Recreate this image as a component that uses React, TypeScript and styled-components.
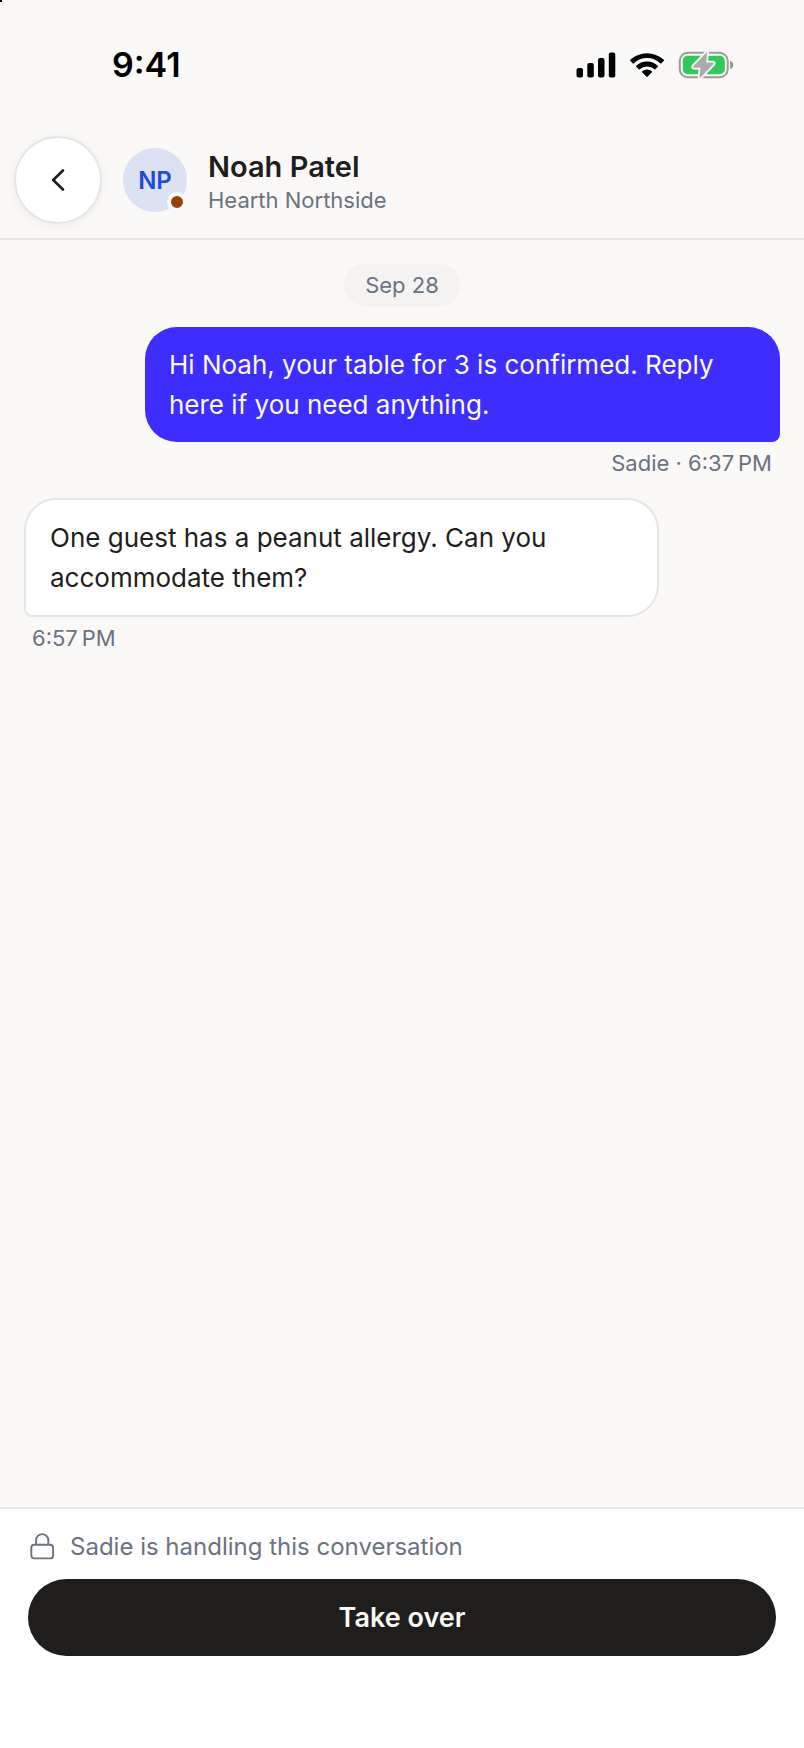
import React from "react";
import styled, { createGlobalStyle } from "styled-components";

const GlobalStyle = createGlobalStyle`
  * {
    box-sizing: border-box;
  }

  body {
    margin: 0;
    background: #faf9f7;
    color: #1f1e1c;
    font-family: Inter, "Liberation Sans", sans-serif;
  }

  button {
    font-family: inherit;
    cursor: pointer;
  }
`;

const Screen = styled.div`
  position: relative;
  min-height: 100vh;
  display: flex;
  flex-direction: column;
`;

const CornerMark = styled.span`
  position: absolute;
  top: 0;
  left: 0;
  width: 2px;
  height: 2px;
  background: #000000;
`;

const StatusBar = styled.div`
  height: 130px;
  padding: 0 70px 0 112px;
  display: flex;
  justify-content: space-between;
  align-items: center;
  color: #000000;
`;

const Clock = styled.time`
  font-size: 34px;
  line-height: 40px;
  font-weight: 600;
`;

const StatusIcons = styled.div`
  display: flex;
  align-items: center;
  gap: 14px;

  svg {
    display: block;
  }
`;

const StyledHeader = styled.header`
  padding: 6px 14px 14px;
  display: flex;
  align-items: center;
  border-bottom: 2px solid #e6e5e2;
`;

const BackButton = styled.button`
  width: 88px;
  height: 88px;
  padding: 0;
  display: flex;
  align-items: center;
  justify-content: center;
  border: 2px solid #e6e5e2;
  border-radius: 50%;
  background: #ffffff;
  color: #1f1e1c;
  box-shadow: 0 2px 8px rgba(0, 0, 0, 0.06);
`;

const Avatar = styled.div`
  position: relative;
  width: 64px;
  height: 64px;
  margin: 0 21px;
  display: flex;
  align-items: center;
  justify-content: center;
  border-radius: 50%;
  background: #dce1f3;
  color: #1d4ed8;
  font-size: 24px;
  font-weight: 600;
`;

const Presence = styled.span`
  position: absolute;
  right: 0;
  bottom: 0;
  width: 20px;
  height: 20px;
  border: 4px solid #faf9f7;
  border-radius: 50%;
  background: #92400e;
`;

const Contact = styled.div`
  padding-top: 4px;

  h1 {
    margin: 0;
    font-size: 29px;
    line-height: 36px;
    font-weight: 600;
  }

  p {
    margin: 0;
    color: #6b7280;
    font-size: 22px;
    line-height: 30px;
  }
`;

const Thread = styled.main`
  flex: 1;
  padding: 24px;
  display: flex;
  flex-direction: column;
`;

const DayPill = styled.div`
  align-self: center;
  margin-bottom: 21px;
  padding: 6px 21px;
  border-radius: 21px;
  background: #f4f3f1;
  color: #6b7280;
  font-size: 22px;
  line-height: 30px;
`;

const Message = styled.article<{ $outgoing?: boolean }>`
  display: flex;
  flex-direction: column;
  align-items: ${({ $outgoing }) => ($outgoing ? "flex-end" : "flex-start")};
  margin-bottom: 20px;
`;

const Bubble = styled.p<{ $outgoing?: boolean }>`
  width: 84%;
  margin: 0;
  padding: 18px 24px 17px;
  border: ${({ $outgoing }) => ($outgoing ? "none" : "2px solid #e6e5e2")};
  border-radius: ${({ $outgoing }) =>
    $outgoing ? "32px 32px 8px 32px" : "32px 32px 32px 8px"};
  background: ${({ $outgoing }) => ($outgoing ? "#3d2eff" : "#ffffff")};
  color: ${({ $outgoing }) => ($outgoing ? "#faf9f7" : "#1f1e1c")};
  font-size: 26px;
  line-height: 40px;
`;

const Meta = styled.div`
  padding: 6px 8px 0;
  color: #6b7280;
  font-size: 22px;
  line-height: 30px;
`;

const Footer = styled.footer`
  padding: 22px 28px 92px;
  border-top: 2px solid #e6e5e2;
  background: #ffffff;
`;

const Notice = styled.div`
  display: flex;
  align-items: center;
  gap: 14px;
  margin-bottom: 16px;
  color: #6b7280;
  font-size: 24px;
  line-height: 32px;
`;

const TakeOverButton = styled.button`
  display: block;
  width: 100%;
  padding: 20px;
  border: none;
  border-radius: 39px;
  background: #1f1e1c;
  color: #faf9f7;
  font-size: 27px;
  line-height: 37px;
  font-weight: 600;
`;

const SignalIcon = () => (
  <svg width="40" height="26" viewBox="0 0 40 26" fill="currentColor">
    <rect x="0.5" y="16" width="6.5" height="9.5" rx="2" />
    <rect x="11.3" y="11" width="6.5" height="14.5" rx="2" />
    <rect x="22" y="6" width="6.5" height="19.5" rx="2" />
    <rect x="32.8" y="0.5" width="6.5" height="25" rx="2" />
  </svg>
);

const WifiIcon = () => (
  <svg width="34" height="25" viewBox="0 0 17.14 12.4" fill="currentColor">
    <path d="M8.57 2.47c2.49 0 4.88.95 6.68 2.67.14.13.35.13.49 0l1.3-1.32a.36.36 0 0 0 0-.51c-4.74-4.41-12.2-4.41-16.93 0a.36.36 0 0 0 0 .51l1.29 1.31c.14.13.35.14.49 0 1.8-1.71 4.19-2.66 6.68-2.66Z" />
    <path d="M8.57 6.73c1.37 0 2.68.5 3.7 1.42.13.13.35.13.48 0l1.3-1.32a.36.36 0 0 0 0-.52 8.03 8.03 0 0 0-10.95 0 .36.36 0 0 0 0 .52l1.29 1.32c.13.13.35.13.49 0a5.53 5.53 0 0 1 3.69-1.42Z" />
    <path d="M11.15 9.35a.36.36 0 0 1-.1.26l-2.24 2.26a.34.34 0 0 1-.49 0L6.08 9.61a.36.36 0 0 1 .02-.52 3.82 3.82 0 0 1 4.94 0c.07.07.11.16.11.26Z" />
  </svg>
);

const BatteryIcon = () => (
  <svg width="56" height="28" viewBox="0 0 56 28" fill="none">
    <rect x="1.75" y="1.75" width="48" height="24.5" rx="8" stroke="#9b9b99" strokeWidth="2" />
    <path d="M52.2 9.8c1.8.6 2.9 2.2 2.9 4.2s-1.1 3.6-2.9 4.2Z" fill="#8f8f8d" />
    <rect x="4.8" y="4.8" width="42" height="18.4" rx="5" fill="#34c759" />
    <path
      d="M29.2 0.8 15.2 15.2c-.5.7-.2 1.5.6 1.5h6.6L21.4 27.8 35.6 13.1c.5-.7.2-1.5-.6-1.5h-6.8Z"
      fill="#acacac"
      stroke="#faf9f7"
      strokeWidth="3.5"
      strokeLinejoin="round"
      paintOrder="stroke"
    />
  </svg>
);

const BackIcon = () => (
  <svg width="30" height="30" viewBox="0 0 30 30" fill="none">
    <path
      d="M20 5.5 10.2 15l9.8 9.5"
      stroke="currentColor"
      strokeWidth="2.6"
      strokeLinecap="round"
      strokeLinejoin="round"
    />
  </svg>
);

const LockIcon = () => (
  <svg width="28" height="28" viewBox="0 0 28 28" fill="none" stroke="currentColor" strokeWidth="1.9">
    <rect x="3.3" y="11.8" width="21.8" height="13.6" rx="3" />
    <path d="M8.1 11.8V7.2a6.1 6.1 0 0 1 12.2 0v4.6" />
  </svg>
);

interface ChatMessage {
  id: number;
  text: string;
  meta: string;
  outgoing?: boolean;
}

const messages: ChatMessage[] = [
  {
    id: 1,
    text: "Hi Noah, your table for 3 is confirmed. Reply here if you need anything.",
    meta: "Sadie · 6:37\u202fPM",
    outgoing: true,
  },
  {
    id: 2,
    text: "One guest has a peanut allergy. Can you accommodate them?",
    meta: "6:57\u202fPM",
  },
];

const App: React.FC = () => {
  return (
    <Screen>
      <GlobalStyle />
      <CornerMark />
      <StatusBar>
        <Clock>9:41</Clock>
        <StatusIcons>
          <SignalIcon />
          <WifiIcon />
          <BatteryIcon />
        </StatusIcons>
      </StatusBar>
      <StyledHeader>
        <BackButton aria-label="Back">
          <BackIcon />
        </BackButton>
        <Avatar>
          NP
          <Presence />
        </Avatar>
        <Contact>
          <h1>Noah Patel</h1>
          <p>Hearth Northside</p>
        </Contact>
      </StyledHeader>
      <Thread>
        <DayPill>Sep 28</DayPill>
        {messages.map((message) => (
          <Message key={message.id} $outgoing={message.outgoing}>
            <Bubble $outgoing={message.outgoing}>{message.text}</Bubble>
            <Meta>{message.meta}</Meta>
          </Message>
        ))}
      </Thread>
      <Footer>
        <Notice>
          <LockIcon />
          Sadie is handling this conversation
        </Notice>
        <TakeOverButton>Take over</TakeOverButton>
      </Footer>
    </Screen>
  );
};

export default App;
